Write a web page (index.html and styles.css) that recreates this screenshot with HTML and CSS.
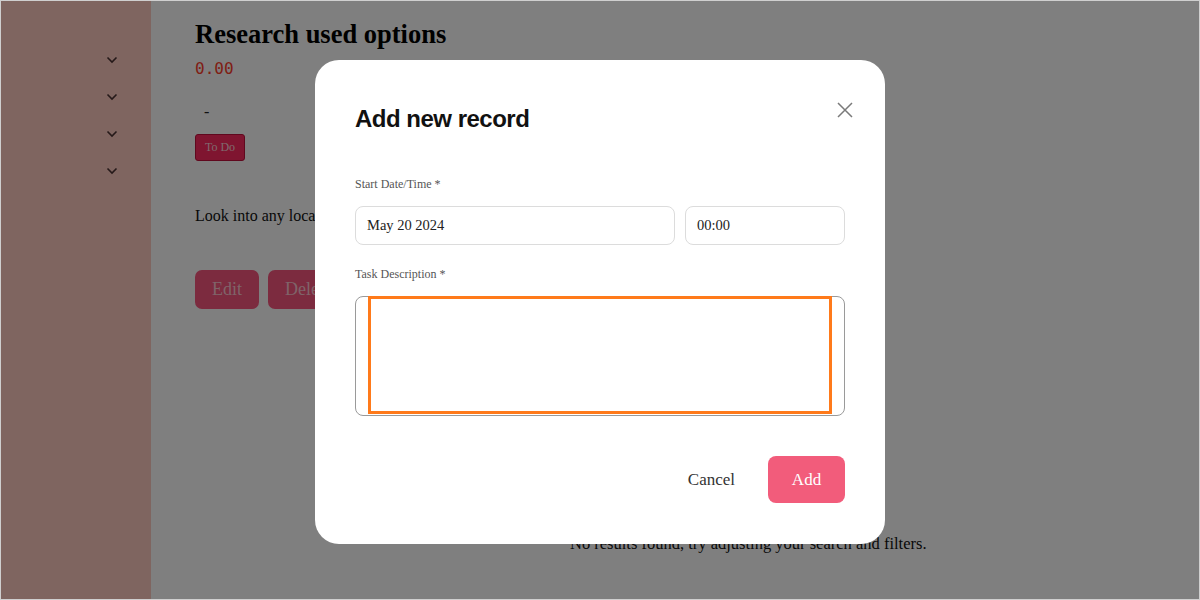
FILE: index.html
```html
<!DOCTYPE html>
<html lang="en">
<head>
<meta charset="utf-8">
<title>Add new record</title>
<link rel="stylesheet" href="styles.css">
</head>
<body>
<div class="frame">
  <div class="app">
    <aside class="sidebar">
      <div class="side-item"><svg class="chev" width="12" height="8" viewBox="0 0 12 8"><path d="M1.5 1.5 6 6l4.5-4.5"/></svg></div>
      <div class="side-item"><svg class="chev" width="12" height="8" viewBox="0 0 12 8"><path d="M1.5 1.5 6 6l4.5-4.5"/></svg></div>
      <div class="side-item"><svg class="chev" width="12" height="8" viewBox="0 0 12 8"><path d="M1.5 1.5 6 6l4.5-4.5"/></svg></div>
      <div class="side-item"><svg class="chev" width="12" height="8" viewBox="0 0 12 8"><path d="M1.5 1.5 6 6l4.5-4.5"/></svg></div>
    </aside>
    <main class="main">
      <h1 class="task-title">Research used options</h1>
      <div class="amount">0.00</div>
      <div class="dash">-</div>
      <span class="badge">To Do</span>
      <p class="task-desc">Look into any local options</p>
      <div class="actions">
        <button class="btn-soft">Edit</button>
        <button class="btn-soft">Delete</button>
      </div>
      <p class="empty">No results found, try adjusting your search and filters.</p>
    </main>
  </div>
  <div class="backdrop">
    <div class="modal">
      <div class="modal-head">
        <h2 class="modal-title">Add new record</h2>
        <button class="close" aria-label="Close">
          <svg width="16" height="16" viewBox="0 0 16 16"><path d="M1 1l14 14M15 1 1 15"/></svg>
        </button>
      </div>
      <label class="label">Start Date/Time *</label>
      <div class="date-row">
        <div class="input">May 20 2024</div>
        <div class="input">00:00</div>
      </div>
      <label class="label label-2">Task Description *</label>
      <div class="textarea"><div class="focus-box"></div></div>
      <div class="modal-foot">
        <button class="cancel">Cancel</button>
        <button class="add">Add</button>
      </div>
    </div>
  </div>
</div>
</body>
</html>
```

FILE: styles.css
```css
* { box-sizing: border-box; }
html, body { margin: 0; padding: 0; }
body {
  width: 1200px;
  height: 600px;
  overflow: hidden;
  font-family: "Liberation Serif", "DejaVu Serif", serif;
  background: #fff;
}
.frame {
  position: relative;
  width: 1200px;
  height: 600px;
  border: 1px solid #cfcfcf;
  overflow: hidden;
}
.app {
  display: flex;
  height: 100%;
  background: #fff;
}
.sidebar {
  width: 150px;
  flex: none;
  background: #ffcac1;
  padding-top: 40px;
  display: flex;
  flex-direction: column;
  align-items: flex-end;
  padding-right: 33px;
}
.side-item {
  height: 37px;
  display: flex;
  align-items: center;
}
.chev path {
  fill: none;
  stroke: #4a3232;
  stroke-width: 1.6;
}
.main {
  flex: 1;
  padding: 18px 0 0 44px;
  color: #222;
}
.task-title {
  margin: 0;
  font-size: 26.5px;
  line-height: 30px;
  font-weight: 700;
  color: #000;
}
.amount {
  margin-top: 10px;
  font-family: "DejaVu Sans Mono", "Liberation Mono", monospace;
  font-size: 16px;
  line-height: 20px;
  color: #ff3d2a;
}
.dash {
  margin-top: 22px;
  padding-left: 9px;
  font-size: 16px;
  line-height: 22px;
}
.badge {
  display: inline-block;
  margin-top: 11px;
  width: 50px;
  height: 27px;
  line-height: 25px;
  text-align: center;
  font-size: 12px;
  color: #ffd2dc;
  background: #ff2a60;
  border: 1px solid #c0103c;
  border-radius: 3px;
}
.task-desc {
  margin: 45px 0 0;
  white-space: nowrap;
  font-size: 16px;
  line-height: 20px;
  color: #111;
}
.actions {
  display: flex;
  gap: 9px;
  margin-top: 44px;
}
.btn-soft {
  height: 39px;
  padding: 0 17px;
  border: none;
  border-radius: 7px;
  background: #f8567e;
  color: #ffc6d2;
  font-family: inherit;
  font-size: 18px;
}
.empty {
  margin: 225px 0 0 375px;
  font-size: 16.5px;
  line-height: 20px;
  color: #111;
}
.backdrop {
  position: absolute;
  inset: 0;
  background: rgba(0, 0, 0, 0.5);
  display: flex;
  align-items: center;
  justify-content: center;
}
.modal {
  width: 570px;
  height: 484px;
  margin-top: 4px;
  background: #fff;
  border-radius: 24px;
  padding: 43px 40px 40px;
  display: flex;
  flex-direction: column;
}
.modal-head {
  display: flex;
  justify-content: space-between;
  align-items: flex-start;
  height: 32px;
}
.modal-title {
  margin: 0;
  font-family: "Liberation Sans", Arial, sans-serif;
  font-weight: 700;
  font-size: 24px;
  line-height: 32px;
  letter-spacing: -0.5px;
  color: #111;
}
.close {
  border: none;
  background: none;
  padding: 0;
  margin: -1px -8px 0 0;
  width: 16px;
  height: 16px;
  display: flex;
}
.close path {
  stroke: #7a7a7a;
  stroke-width: 1.5;
  fill: none;
}
.label {
  display: block;
  margin-top: 41px;
  font-size: 12px;
  line-height: 16px;
  color: #555;
}
.label-2 { margin-top: 21px; }
.date-row {
  display: grid;
  grid-template-columns: 2fr 1fr;
  gap: 10px;
  margin-top: 14px;
}
.input {
  height: 39px;
  border: 1.5px solid #dcdcdc;
  border-radius: 8px;
  padding: 0 11px;
  display: flex;
  align-items: center;
  font-size: 14.5px;
  color: #222;
}
.textarea {
  margin-top: 14px;
  height: 120px;
  border: 1px solid #9a9a9a;
  border-radius: 8px;
  padding: 0 12px;
}
.focus-box {
  height: 118px;
  margin-top: -1px;
  border: 3px solid #ff7a1a;
}
.modal-foot {
  display: flex;
  justify-content: flex-end;
  align-items: center;
  gap: 33px;
  margin-top: 40px;
}
.cancel {
  border: none;
  background: none;
  padding: 0;
  font-family: inherit;
  font-size: 17px;
  color: #333;
}
.add {
  width: 77px;
  height: 47px;
  border: none;
  border-radius: 8px;
  background: #f25c7b;
  color: #fff;
  font-family: inherit;
  font-size: 17px;
}
```
